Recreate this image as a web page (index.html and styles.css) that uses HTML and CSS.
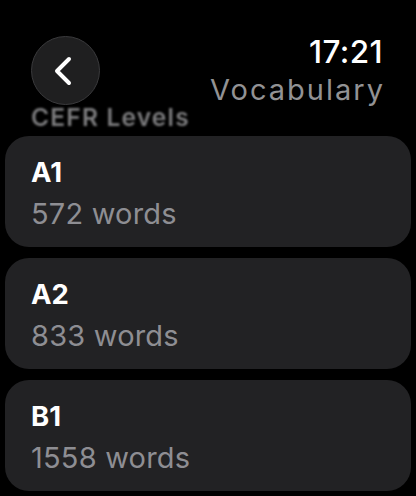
FILE: index.html
```html
<!DOCTYPE html>
<html lang="en">
<head>
    <meta charset="UTF-8">
    <meta name="viewport" content="width=device-width, initial-scale=1.0">
    <title>Vocabulary</title>
    <link rel="stylesheet" href="styles.css">
</head>
<body>
    <div class="screen">
        <div class="topbar">
            <button class="back" aria-label="Back">
                <svg width="22" height="32" viewBox="0 0 22 32">
                    <path d="M17 4 L5 16 L17 28" fill="none" stroke="#fff" stroke-width="4" stroke-linecap="round" stroke-linejoin="round"/>
                </svg>
            </button>
            <div class="clock">
                <div class="time">17:21</div>
                <div class="title">Vocabulary</div>
            </div>
        </div>
        <h2 class="section-title">CEFR Levels</h2>
        <div class="list">
            <div class="card">
                <div class="level">A1</div>
                <div class="count">572 words</div>
            </div>
            <div class="card">
                <div class="level">A2</div>
                <div class="count">833 words</div>
            </div>
            <div class="card">
                <div class="level">B1</div>
                <div class="count">1558 words</div>
            </div>
        </div>
    </div>
</body>
</html>
```

FILE: styles.css
```css
body {
    margin: 0;
    background-color: #000;
    font-family: Inter, "Noto Sans", sans-serif;
    color: #fff;
}

.screen {
    width: 416px;
    height: 496px;
    overflow: hidden;
}

.topbar {
    display: flex;
    justify-content: space-between;
    align-items: flex-start;
    padding: 33px 33px 0 31px;
}

.back {
    position: relative;
    z-index: 1;
    box-sizing: border-box;
    width: 69px;
    height: 69px;
    margin-top: 3px;
    border-radius: 50%;
    background-color: #1f1f20;
    border: 1.5px solid #3a3a3c;
    display: flex;
    align-items: center;
    justify-content: center;
    padding: 0 6px 0 0;
}

.clock {
    text-align: right;
}

.time {
    font-size: 31.5px;
    line-height: 38px;
    font-weight: 500;
    letter-spacing: 0.4px;
}

.title {
    font-size: 29px;
    line-height: 38px;
    color: #929294;
    letter-spacing: 2px;
    margin-right: -2px;
}

.section-title {
    margin: -6px 0 5px 31px;
    font-size: 24.5px;
    line-height: 28px;
    font-weight: 600;
    color: #7c7c7e;
    letter-spacing: 1.2px;
    filter: blur(1px);
}

.list {
    display: flex;
    flex-direction: column;
    gap: 11px;
    padding: 0 5px;
}

.card {
    box-sizing: border-box;
    height: 111px;
    padding: 14px 26px 0;
    border-radius: 24px;
    background-color: #222224;
}

.level {
    font-size: 27.5px;
    line-height: 44px;
    font-weight: 700;
}

.count {
    font-size: 29px;
    line-height: 39px;
    color: #8e8e93;
    letter-spacing: 0.2px;
}
```
